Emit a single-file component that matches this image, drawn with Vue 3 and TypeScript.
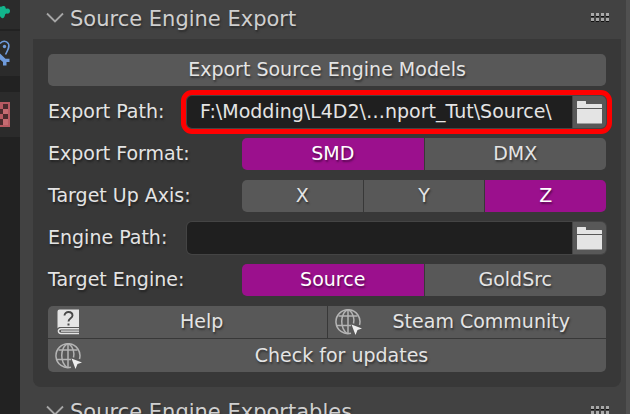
<script setup lang="ts">
import { ref } from 'vue'

interface Choice {
  id: string
  label: string
  name: string
  options: string[]
}

const exportPath = ref('F:\\Modding\\L4D2\\…nport_Tut\\Source\\')
const enginePath = ref('')

const format: Choice = { id: 'format', label: 'Export Format:', name: 'format', options: ['SMD', 'DMX'] }
const axis: Choice = { id: 'axis', label: 'Target Up Axis:', name: 'axis', options: ['X', 'Y', 'Z'] }
const engine: Choice = { id: 'engine', label: 'Target Engine:', name: 'engine', options: ['Source', 'GoldSrc'] }

const selected = ref<Record<string, string>>({ format: 'SMD', axis: 'Z', engine: 'Source' })
</script>

<template>
  <div class="editor">
    <nav class="tabs" aria-label="Properties tabs">
      <button class="tab tab-first" type="button" aria-label="Modifiers">
        <svg width="20" height="29" viewBox="0 0 20 29">
          <path d="M0 6.500C2 7.500 2.500 5.500 4.500 6.200C6 6.800 5 8.500 6.500 8.800C8.500 8 10 9 10 11C10 13 8.500 14 6.500 13.500C4.500 13.800 5.500 15.500 4 17.500C2.500 19 1 18 0 16Z" fill="#12b58c" />
        </svg>
      </button>
      <button class="tab" type="button" aria-label="Bone constraints">
        <svg width="20" height="45" viewBox="0 0 20 45">
          <path d="M0 12.500C2.500 9.500 6.500 9.700 8.300 12.500C10 15.500 8 19 5.500 23.500" fill="none" stroke="#6f9bdc" stroke-width="1.500" />
          <circle cx="4.500" cy="15.500" r="1.700" fill="#6f9bdc" />
          <path d="M0 22.500L5.500 27.800H9.500V31H6.500V34.500H3V31L0 28.500Z" fill="#6f9bdc" />
        </svg>
      </button>
      <button class="tab tab-group" type="button" aria-label="Texture">
        <svg width="20" height="45" viewBox="0 0 20 45">
          <path d="M0 10H10V35H0Z" fill="#b65a62" />
          <path d="M3 12H8V17H3ZM0 17H3V22H0ZM3 22H8V27H3ZM0 27H3V33H0Z" fill="#4a2b2e" />
          <path d="M3 17H8V22H3ZM3 27H8V33H3Z" fill="#c56b72" />
        </svg>
      </button>
    </nav>

    <main class="region">
      <header class="panel-header">
        <button class="toggle" type="button">
          <svg width="18" height="12" viewBox="0 0 18 12"><path d="M1 1.500L9 9.500L17 1.500" fill="none" stroke="#a6a6a6" stroke-width="1.800" /></svg>
          <span>Source Engine Export</span>
        </button>
        <svg class="grip" width="18" height="9" viewBox="0 0 18 9">
          <path d="M0 3h3v1H0zM5 3h3v1H5zM10 3h3v1h-3zM15 3h3v1h-3zM0 8h3v1H0zM5 8h3v1H5zM10 8h3v1h-3zM15 8h3v1h-3z" fill="#101010" />
          <path d="M0 0h3v3H0zM5 0h3v3H5zM10 0h3v3h-3zM15 0h3v3h-3zM0 5h3v3H0zM5 5h3v3H5zM10 5h3v3h-3zM15 5h3v3h-3z" fill="#a8a8a8" />
        </svg>
      </header>

      <section class="panel">
        <button class="btn wide" type="button">Export Source Engine Models</button>

        <div class="row">
          <label class="label short" for="export-path">Export Path:</label>
          <div class="path highlighted">
            <input id="export-path" v-model="exportPath" type="text" />
            <button class="btn browse" type="button" aria-label="Browse export path">
              <svg width="26" height="24" viewBox="0 0 26 24"><path d="M0 1.500Q0 1 .5 1H8.500Q9 1 9 1.500V4H24.500Q25 4 25 4.500V8H0ZM0 9H25V23Q25 23.500 24.500 23.500H.5Q0 23.500 0 23Z" fill="#e4e4e4" /></svg>
            </button>
          </div>
        </div>

        <fieldset v-for="choice in [format, axis]" :key="choice.id" class="row">
          <legend class="hidden">{{ choice.label }}</legend>
          <span class="label long" aria-hidden="true">{{ choice.label }}</span>
          <div class="segments">
            <label v-for="option in choice.options" :key="option" class="segment" :class="{ on: selected[choice.id] === option }">
              <input v-model="selected[choice.id]" class="hidden" type="radio" :name="choice.name" :value="option" />{{ option }}
            </label>
          </div>
        </fieldset>

        <div class="row">
          <label class="label short" for="engine-path">Engine Path:</label>
          <div class="path">
            <input id="engine-path" v-model="enginePath" type="text" />
            <button class="btn browse" type="button" aria-label="Browse engine path">
              <svg width="26" height="24" viewBox="0 0 26 24"><path d="M0 1.500Q0 1 .5 1H8.500Q9 1 9 1.500V4H24.500Q25 4 25 4.500V8H0ZM0 9H25V23Q25 23.500 24.500 23.500H.5Q0 23.500 0 23Z" fill="#e4e4e4" /></svg>
            </button>
          </div>
        </div>

        <fieldset class="row">
          <legend class="hidden">{{ engine.label }}</legend>
          <span class="label long" aria-hidden="true">{{ engine.label }}</span>
          <div class="segments">
            <label v-for="option in engine.options" :key="option" class="segment" :class="{ on: selected.engine === option }">
              <input v-model="selected.engine" class="hidden" type="radio" :name="engine.name" :value="option" />{{ option }}
            </label>
          </div>
        </fieldset>

        <div class="links">
          <button class="btn with-icon" type="button">
            <svg width="28" height="28" viewBox="0 0 28 28">
              <path d="M4.500 2.500H24V20H5C4 20 3 20.500 2.500 21.500V4.500Q2.500 2.500 4.500 2.500Z" fill="#e4e4e4" />
              <path d="M24 21.700H6C2.500 21.700 2.500 26.500 6 26.500H24M24 24.100H6" fill="none" stroke="#e4e4e4" stroke-width="1.400" />
              <path d="M9.500 8.500C9.500 3.800 17.500 4 17.500 8.500C17.500 11.500 13.500 11 13.500 14.500" fill="none" stroke="#484848" stroke-width="1.900" />
              <path d="M12.500 16.500h2v2h-2z" fill="#484848" />
            </svg>
            <span>Help</span>
          </button>
          <button class="btn with-icon" type="button">
            <svg width="28" height="28" viewBox="0 0 28 28">
              <g fill="none" stroke="#b4b4b4" stroke-width="1.500">
                <path d="M16 26.300A12 12 0 1 1 24.500 18" />
                <path d="M12 26.500C5 21 5 8 12 2.800M14 2.800C18.500 6 19.500 12 18.500 16.500M13 2.500V26.500M3.500 9H22.500M1.500 18.500H16" />
              </g>
              <path d="M16.500 17.500L27 21.500L22.500 23L20.500 28Z" fill="#eeeeee" />
            </svg>
            <span>Steam Community</span>
          </button>
          <button class="btn with-icon updates" type="button">
            <svg width="28" height="28" viewBox="0 0 28 28">
              <g fill="none" stroke="#b4b4b4" stroke-width="1.500">
                <path d="M16 26.300A12 12 0 1 1 24.500 18" />
                <path d="M12 26.500C5 21 5 8 12 2.800M14 2.800C18.500 6 19.500 12 18.500 16.500M13 2.500V26.500M3.500 9H22.500M1.500 18.500H16" />
              </g>
              <path d="M16.500 17.500L27 21.500L22.500 23L20.500 28Z" fill="#eeeeee" />
            </svg>
            <span>Check for updates</span>
          </button>
        </div>
      </section>

      <header class="panel-header">
        <button class="toggle" type="button">
          <svg width="18" height="12" viewBox="0 0 18 12"><path d="M1 1.500L9 9.500L17 1.500" fill="none" stroke="#a6a6a6" stroke-width="1.800" /></svg>
          <span>Source Engine Exportables</span>
        </button>
        <svg class="grip" width="18" height="9" viewBox="0 0 18 9">
          <path d="M0 3h3v1H0zM5 3h3v1H5zM10 3h3v1h-3zM15 3h3v1h-3zM0 8h3v1H0zM5 8h3v1H5zM10 8h3v1h-3zM15 8h3v1h-3z" fill="#101010" />
          <path d="M0 0h3v3H0zM5 0h3v3H5zM10 0h3v3h-3zM15 0h3v3h-3zM0 5h3v3H0zM5 5h3v3H5zM10 5h3v3h-3zM15 5h3v3h-3z" fill="#a8a8a8" />
        </svg>
      </header>
    </main>
    <div class="scrollbar"></div>
  </div>
</template>

<style>
body {
  background: #424242;
}
</style>

<style scoped>
.editor {
  display: flex;
  height: 100vh;
  overflow: hidden;
  background: #424242;
  color: #e4e4e4;
  font-family: "DejaVu Sans", sans-serif;
  font-size: 19px;
  line-height: 24px;
}

.editor *,
.editor *::before {
  box-sizing: border-box;
}

button,
input {
  font: inherit;
  color: inherit;
  border: 0;
  margin: 0;
  padding: 0;
}

svg {
  display: block;
  flex: none;
}

.tabs {
  flex: none;
  width: 20px;
  display: flex;
  flex-direction: column;
  gap: 2px;
  background: #222222;
}

.tab {
  display: block;
  height: 45px;
  background: #2b2b2b;
}

.tab-first {
  height: 29px;
}

.tab-group {
  margin-top: 14px;
}

.region {
  flex: 1;
  min-width: 0;
  padding: 0 5px 0 13px;
}

.scrollbar {
  flex: none;
  width: 4px;
  background: #505050;
}

.panel-header {
  display: flex;
  align-items: center;
  justify-content: space-between;
  height: 39px;
  padding: 0 12px 4px 13px;
}

.toggle {
  display: flex;
  align-items: center;
  gap: 6px;
  background: none;
  color: #cfcfcf;
  font-size: 21px;
  line-height: 26px;
  white-space: nowrap;
  text-shadow: 1px 2px 2px #2c2c2c;
}

.toggle span {
  padding-top: 2px;
}

.panel {
  display: flex;
  flex-direction: column;
  gap: 10px;
  margin-bottom: 6px;
  padding: 15px;
  background: #383838;
  border-radius: 0 0 8px 8px;
}

.btn {
  background: #585858;
  text-shadow: 1px 2px 2px #333333;
}

.wide {
  height: 32px;
  padding-bottom: 2px;
  border-radius: 5px;
}

.row {
  display: flex;
  align-items: center;
  height: 32px;
  min-width: 0;
  margin: 0;
  padding: 0;
  border: 0;
}

.label {
  flex: none;
  padding-bottom: 2px;
  white-space: nowrap;
  text-shadow: 1px 2px 2px #222222;
}

.short {
  width: 139px;
}

.long {
  width: 194px;
}

.path {
  flex: 1;
  min-width: 0;
  display: flex;
  gap: 1px;
  height: 32px;
  border-radius: 5px;
  background: #444444;
  box-shadow: 0 0 0 1px #444444;
}

.path input {
  flex: 1;
  min-width: 0;
  padding: 0 13px 2px;
  background: #1f1f1f;
  border-radius: 5px 0 0 5px;
}

.highlighted {
  outline: 5px solid #ff0000;
  outline-offset: 1px;
}

.browse {
  display: flex;
  align-items: center;
  justify-content: center;
  width: 33px;
  border-radius: 0 5px 5px 0;
}

.segments {
  flex: 1;
  display: flex;
  gap: 1px;
  height: 32px;
}

.segment {
  flex: 1 1 0;
  display: flex;
  align-items: center;
  justify-content: center;
  padding-bottom: 2px;
  background: #585858;
  text-shadow: 1px 2px 2px #333333;
}

.segment:first-child {
  border-radius: 5px 0 0 5px;
}

.segment:last-child {
  border-radius: 0 5px 5px 0;
}

.segment.on {
  background: #9b108d;
  color: #ffffff;
  text-shadow: 1px 2px 2px #5a0852;
}

.hidden {
  position: absolute;
  width: 1px;
  height: 1px;
  overflow: hidden;
  opacity: 0;
  appearance: none;
}

.links {
  display: grid;
  grid-template-columns: 1fr 1fr;
  grid-template-rows: 32px 33px;
  gap: 1px;
  border-radius: 5px;
  overflow: hidden;
}

.with-icon {
  display: flex;
  align-items: center;
  padding: 0 6px 2px 7px;
}

.with-icon span {
  flex: 1;
  text-align: center;
}

.updates {
  grid-column: span 2;
}
</style>
